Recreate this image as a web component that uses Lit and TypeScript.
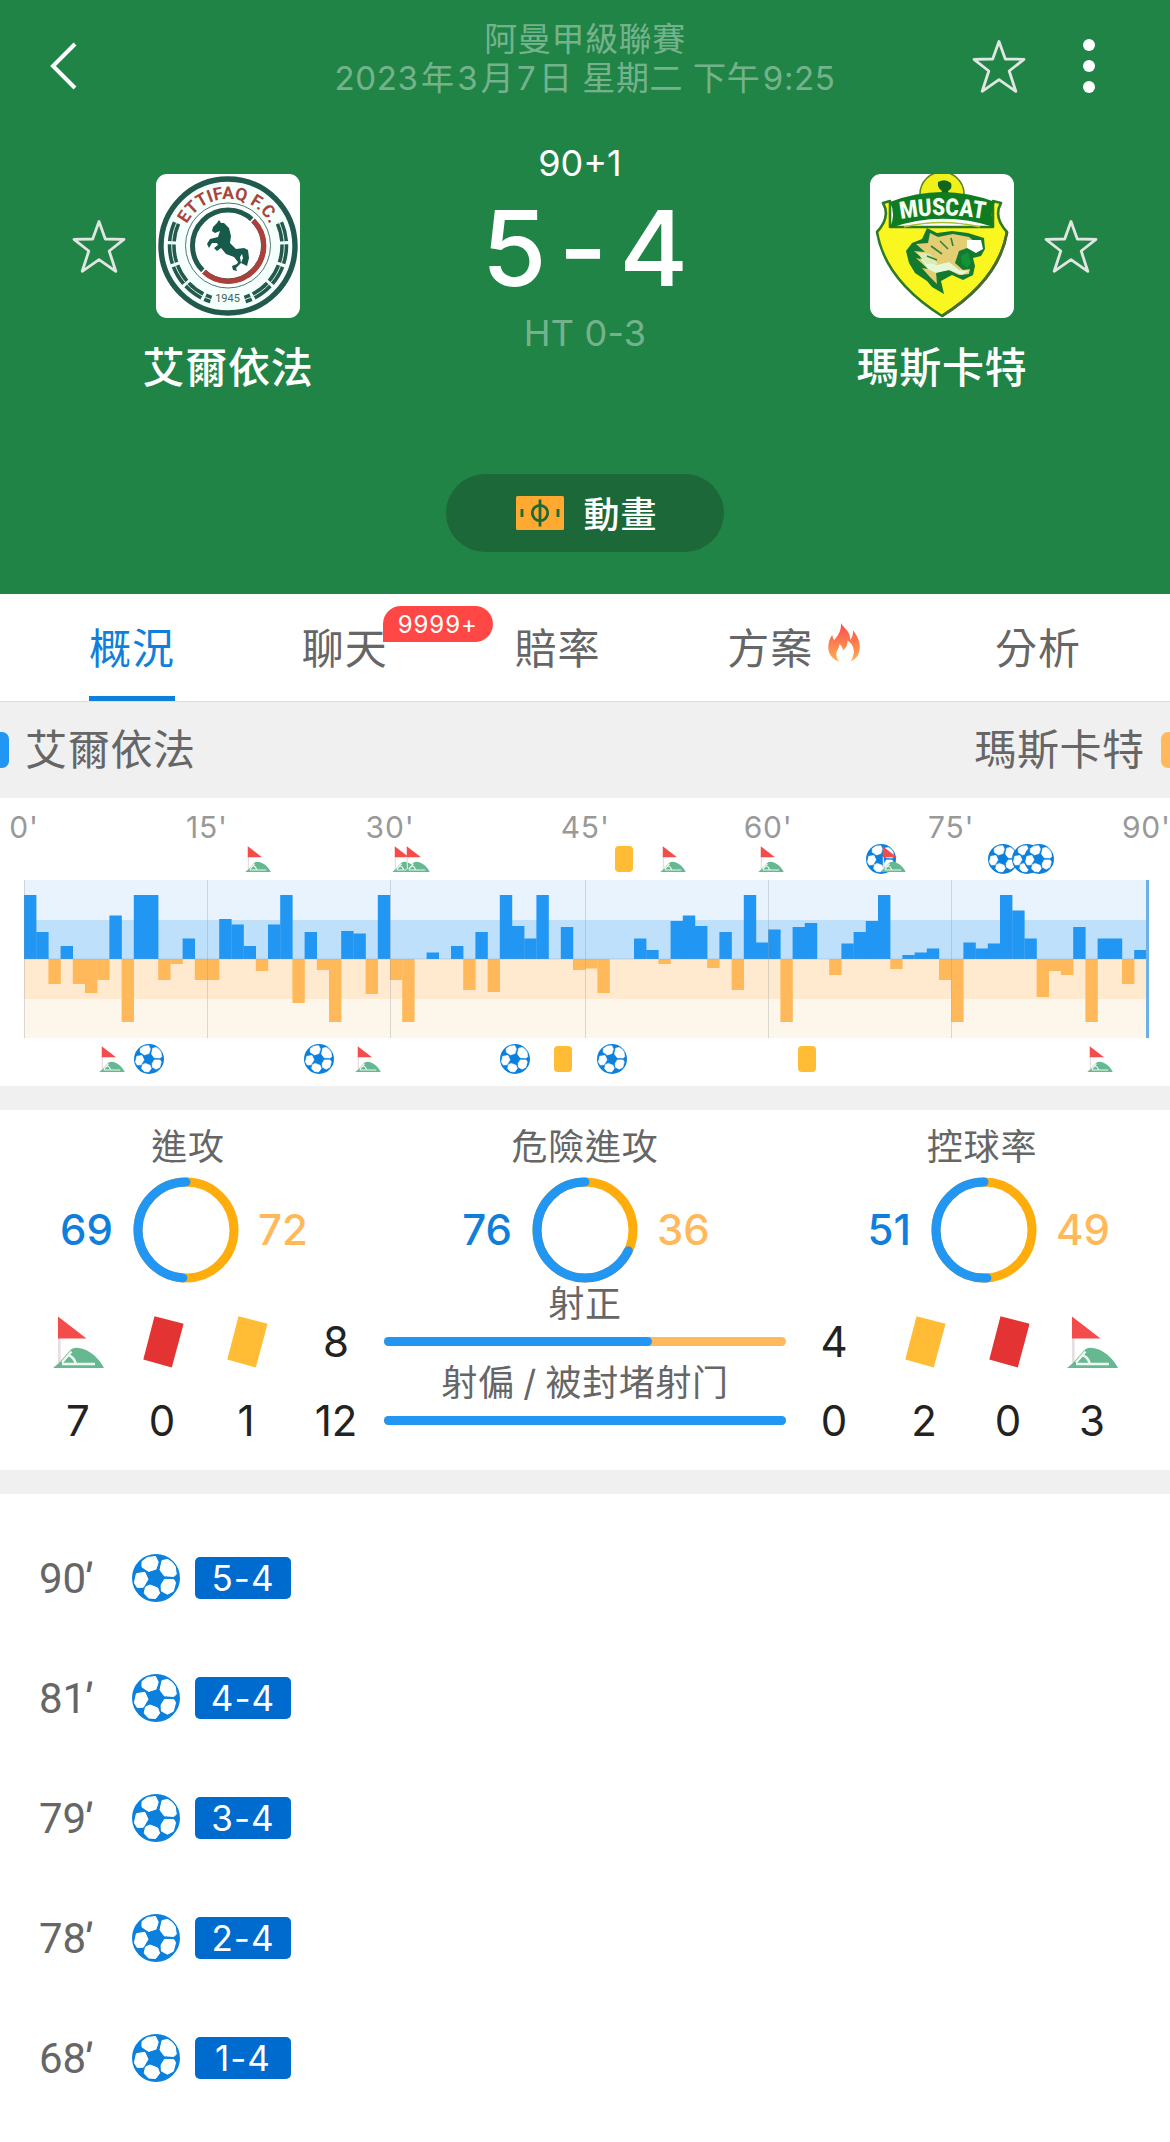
import { LitElement, html, svg, css } from 'lit';
import { customElement, property } from 'lit/decorators.js';

type PinKind = 'corner' | 'goal' | 'card';

interface Pin {
    kind: PinKind;
    slot: number;
}

const SLOT_WIDTH = 12.2;

// One value per slot, positive = home pressure, negative = away pressure
const PRESSURE = [
    64, 27, -25, 13, -25, -34, -21, 43.5, -63, 64, 64, -21, -5, 20.5, -21, -21,
    40, 34.5, 13, -12, 34.5, 64, -44, 27, -11, -63, 28, 25.5, -35, 64, -21, -63,
    0, 6.5, 0, 13, -31, 27, -33, 64, 33, 20.5, 64, 0, 32, -11, -9.5, -34,
    0, 0, 20.5, 9, -5, 38, 43.5, 33, -9, 27, -31, 64, 16.5, 29.5, -63, 32,
    36, 0, -16, 15.5, 27, 38, 64, -10, 4, 6.5, 10.5, -21, -63, 16.5, 10.5, 15.5,
    64, 48.5, 20.5, -38, -12, -16, 32, -63, 20.5, 20.5, -25, 9,
];

const TICKS = [
    { label: "0'", slot: 0 },
    { label: "15'", slot: 15 },
    { label: "30'", slot: 30 },
    { label: "45'", slot: 46 },
    { label: "60'", slot: 61 },
    { label: "75'", slot: 76 },
    { label: "90'", slot: 92 },
];

const HOME_PINS: Pin[] = [
    { kind: 'corner', slot: 19 },
    { kind: 'corner', slot: 31 },
    { kind: 'corner', slot: 32 },
    { kind: 'card', slot: 49 },
    { kind: 'corner', slot: 53 },
    { kind: 'corner', slot: 61 },
    { kind: 'goal', slot: 70 },
    { kind: 'corner', slot: 71 },
    { kind: 'goal', slot: 80 },
    { kind: 'goal', slot: 82 },
    { kind: 'goal', slot: 83 },
];

const AWAY_PINS: Pin[] = [
    { kind: 'corner', slot: 7 },
    { kind: 'goal', slot: 10 },
    { kind: 'goal', slot: 24 },
    { kind: 'corner', slot: 28 },
    { kind: 'goal', slot: 40 },
    { kind: 'card', slot: 44 },
    { kind: 'goal', slot: 48 },
    { kind: 'card', slot: 64 },
    { kind: 'corner', slot: 88 },
];

const RINGS = [
    { label: '進攻', home: 69, away: 72 },
    { label: '危險進攻', home: 76, away: 36 },
    { label: '控球率', home: 51, away: 49 },
];

const GOALS = [
    { minute: '90', score: '5-4' },
    { minute: '81', score: '4-4' },
    { minute: '79', score: '3-4' },
    { minute: '78', score: '2-4' },
    { minute: '68', score: '1-4' },
];

const starIcon = html`
    <svg class="star" viewBox="0 0 54 54">
        <path
            d="M27 2.5 L33.3 20 L52 20.3 L37.2 32 L43.8 52.3 L27 40.6 L10.2 52.3 L16.8 32 L2 20.3 L20.7 20 Z"
            fill="none" stroke="#e2e6e3" stroke-width="2.8" stroke-linejoin="round"
        />
    </svg>
`;

const ballIcon = html`
    <svg class="ball" viewBox="0 0 48 48">
        <circle cx="24" cy="24" r="24" fill="#0c80dd" />
        <g fill="#fff" stroke="#fff" stroke-width="1" stroke-linejoin="round">
            <path d="M10 7.5 L15.5 3.4 L23.6 2.6 L26.2 8 L24 15.2 L16.6 17.4 L10 13 Z" />
            <path d="M30 6.6 L35.6 5.4 Q41 8 43.2 12.6 L44.3 20.3 L41.8 22.4 L32.2 21.8 L28 16 Z" />
            <path d="M32.5 25.4 L41.8 25.6 L43.6 28.6 L41.3 37.2 L35.5 40.2 L29.4 37 L29.1 31 Z" />
            <path d="M13.5 33 L18 31 L25.7 34 L27.6 39.3 L23.5 44.6 L16.6 43.9 L12.2 39.5 Z" />
            <path d="M4.4 19.7 L12.8 18.2 L16 25.3 L11.3 33.2 L5.3 33.6 L2.4 28.8 Z" />
        </g>
    </svg>
`;

const cornerIcon = html`
    <svg class="corner" viewBox="0 0 51 52">
        <rect x="5" y="20" width="2.6" height="30" fill="#e6dede" />
        <path d="M5 0.5 L33.5 22.5 L5 22.5 Z" fill="#f44b4b" />
        <path d="M0 52 L6 47 L16.5 35 Q19.5 31.5 24 31.7 C36 32.5 46 42 51 52 Z" fill="#65b88f" />
        <path
            d="M9 46.5 L18.5 35.5 M15 39 Q21 41 22.5 47 M9 48 H42"
            fill="none" stroke="#eef9f3" stroke-width="2.4"
        />
    </svg>
`;

const cardIcon = (color: string) => html`
    <svg class="tilted-card" viewBox="0 0 41 52">
        <path d="M11.5 0.3 L40.6 7.8 L28.8 51.4 L0.3 43.5 Z" fill=${color} />
    </svg>
`;

const homeCrest = html`
    <svg class="crest" viewBox="0 0 144 144">
        <defs>
            <path id="home-arc" d="M27.5 57.5 A47 47 0 0 1 117 57.5" />
        </defs>
        <rect width="144" height="144" fill="#fff" />
        <circle cx="72" cy="72" r="67" fill="#f5fffc" stroke="#215a4d" stroke-width="5.4" />
        <circle cx="72" cy="71.5" r="42.5" fill="#fff" stroke="#4d7a70" stroke-width="1" />
        <circle cx="72" cy="71.5" r="35.5" fill="none" stroke="#1f5a4c" stroke-width="5" />
        <path d="M97 46.3 A35.5 35.5 0 0 1 47.5 97.3" fill="none" stroke="#ad3f3b" stroke-width="5.2" />
        <path d="M93.5 49 L99.5 42.5 M44.5 100 L50.5 93.5" stroke="#fff" stroke-width="1.8" />
        <g fill="none" stroke="#24594d">
            <path d="M20.5 49 A56.5 56.5 0 0 0 55 125.5" stroke-width="8" stroke-dasharray="19 3" />
            <path d="M123.5 49 A56.5 56.5 0 0 1 89 125.5" stroke-width="8" stroke-dasharray="19 3" />
        </g>
        <g fill="none" stroke="#dcefe9" stroke-width="1">
            <path d="M20.5 49 A56.5 56.5 0 0 0 55 125.5" />
            <path d="M123.5 49 A56.5 56.5 0 0 1 89 125.5" />
        </g>
        <text class="crest-ring-text" fill="#a8443e">
            <textPath href="#home-arc" startOffset="50%" text-anchor="middle" textLength="102" lengthAdjust="spacingAndGlyphs">ETTIFAQ F.C.</textPath>
        </text>
        <text class="crest-year" x="71.5" y="128" text-anchor="middle" fill="#44655c">1945</text>
        <path
            d="M63 46 L61 49 L57 53 L56 57 L59 59 L64 57 L62 63 L54 65 L51 70 L53 74 L56 69 L61 69 L62 71 L58 74 L61 77 L65 74 L70 80 L78 83 L82 88 L81 90 L76 92 L77 96 L81 97 L80 94 L85 89 L84 83 L86 80 L87 84 L85 89 L91 92 L93 84 L92 76 L88 74 L80 75 L74 69 L75 62 L73 54 L68 49 L65 49 Z"
            fill="#17594a"
        />
    </svg>
`;

const awayCrest = html`
    <svg class="crest" viewBox="0 0 144 144">
        <defs>
            <path id="away-arc" d="M29 45.5 Q72 37 116 45.5" />
        </defs>
        <rect width="144" height="144" fill="#fff" />
        <circle cx="72" cy="20" r="22" fill="#f2f01a" stroke="#5f8420" stroke-width="1.6" />
        <path d="M68 8 Q75 4 81 9 Q83 14 78 17 L80 22 H69 L72 17 Q67 14 68 8 Z" fill="#12651c" />
        <path
            d="M13 29 L20 27 V53 L123 53 V27 L131 29 Q123 43 137 58 Q129 106 72 142 Q15 106 7 58 Q21 43 13 29 Z"
            fill="#faf720" stroke="#2d7a26" stroke-width="2.6" stroke-linejoin="round"
        />
        <path d="M137 58 Q129 106 72 142" fill="none" stroke="#4b6b34" stroke-width="3" />
        <path d="M20 28 Q72 8 125 28 Q119 40 124 53 Q72 36 20 54 Q26 40 20 28 Z" fill="#107c22" />
        <path d="M34 53 Q72 44 110 53" fill="none" stroke="#a8c02a" stroke-width="1.6" />
        <text class="crest-banner" fill="#f4fff0">
            <textPath href="#away-arc" startOffset="50%" text-anchor="middle" textLength="84" lengthAdjust="spacingAndGlyphs">MUSCAT</textPath>
        </text>
        <path
            d="M57 54 L67 59 L82 57 L98 59 L114 64 L115 75 L111 82 L103 84 L105 92 L103 101 L93 106 L82 101 L71 107 L74 120 L62 113 L57 107 L45 99 L39 89 L36 77 L42 69 L52 65 Z"
            fill="#137a30"
        />
        <path
            d="M60 59 L68 63 L83 60 L99 63 L105 68 L97 74 L89 77 L85 89 L93 96 L100 95 L99 100 L89 101 L79 96 L66 98 L67 110 L59 102 L52 94 L58 95 L46 84 L54 86 L44 77 L55 78 L46 70 L58 69 Z"
            fill="#e3ce73"
        />
        <path d="M50 84 L67 91 L79 88 L89 96 L99 97 L92 101 L79 96 L66 99 L58 95 Z" fill="#e5f7d7" />
        <path d="M47 78 L60 80 L68 90 L56 90 Z" fill="#dcecb4" />
        <path d="M97 66 L111 66 L113 75 L106 79 L97 74 Z" fill="#fff" />
        <path d="M91 82 L98 78 L101 89 L97 94 L92 90 Z" fill="#149238" />
        <path d="M70 67 L78 75 M61 72 L72 80 M81 64 L83 72 M57 82 L67 86" stroke="#31823a" stroke-width="1.6" />
    </svg>
`;

const flameIcon = html`
    <svg class="flame" viewBox="0 0 33 39">
        <defs>
            <linearGradient id="flame-fill" x1="0" y1="0" x2="0" y2="1">
                <stop offset="0.1" stop-color="#fb5350" />
                <stop offset="1" stop-color="#ffb14f" />
            </linearGradient>
        </defs>
        <path
            d="M13 0 C15 4 20 7 21.5 12 Q22.3 14.5 22 17 Q25.5 13 25 7.5 C29 12 31.8 18 31.8 24 C31.8 31 28.5 36 22.8 38.3 C27.5 31 27 22 19.5 17.5 Q20 23 15 27.5 Q14.5 23 11.5 21 C11 26 8 27.5 8.3 32 Q8.5 36 11.5 38.8 C4.5 36.5 0.3 31 0.3 24.5 C0.3 19.5 1.5 15.5 4.2 12 Q4.5 15 6.3 17 C10.5 12 13.5 7 13 0 Z"
            fill="url(#flame-fill)"
        />
    </svg>
`;

@customElement('momentum-chart')
export class MomentumChart extends LitElement {
    static styles = css`
        :host {
            display: block;
            background: #fff;
            height: 288px;
        }
        .ticks,
        .pins {
            position: relative;
            margin-left: 24px;
            width: 1122px;
        }
        .ticks {
            height: 46px;
        }
        .tick {
            position: absolute;
            top: 11px;
            transform: translateX(-50%);
            font-size: 30px;
            line-height: 36px;
            letter-spacing: 0.8px;
            color: #999;
        }
        .pins {
            height: 30px;
        }
        .pins.home {
            margin-bottom: 6px;
        }
        .pins.away {
            margin-top: 6px;
        }
        .pin {
            position: absolute;
            top: 0;
            height: 30px;
            display: flex;
            align-items: center;
            transform: translateX(-50%);
        }
        .ball {
            display: block;
            width: 30px;
            height: 30px;
        }
        .corner {
            display: block;
            width: 26px;
            height: 26px;
        }
        .booking {
            width: 18px;
            height: 26px;
            border-radius: 4px;
            background: #ffbc34;
        }
        .plot {
            display: block;
            margin-left: 24px;
            width: 1125px;
            height: 158px;
        }
    `;

    private renderPin(pin: Pin) {
        const icon = pin.kind === 'goal' ? ballIcon :
            pin.kind === 'corner' ? cornerIcon :
                html`<div class="booking"></div>`;
        return html`<div class="pin" style="left: ${pin.slot * SLOT_WIDTH + 2.5}px">${icon}</div>`;
    }

    render() {
        return html`
            <div class="ticks">
                ${TICKS.map(t => html`
                    <span class="tick" style="left: ${t.slot * SLOT_WIDTH}px">${t.label}</span>
                `)}
            </div>
            <div class="pins home">${HOME_PINS.map(p => this.renderPin(p))}</div>
            <svg class="plot" viewBox="0 0 1125 158">
                <rect width="1122" height="40" fill="#e8f3fe" />
                <rect y="40" width="1122" height="39" fill="#bfe0fa" />
                <rect y="79" width="1122" height="40" fill="#ffead0" />
                <rect y="119" width="1122" height="39" fill="#fdf7eb" />
                ${PRESSURE.map((v, i) => svg`
                    <rect
                        x=${i * SLOT_WIDTH}
                        y=${v > 0 ? 79 - v : 79}
                        width=${SLOT_WIDTH + 0.2}
                        height=${Math.abs(v)}
                        fill=${v > 0 ? '#2196f3' : '#ffb95a'}
                    />
                `)}
                <rect y="78.5" width="1122" height="1" fill="#8c9aa5" fill-opacity="0.35" />
                ${TICKS.slice(0, -1).map(t => svg`
                    <rect x=${Math.round(t.slot * SLOT_WIDTH)} width="1" height="158" fill="#8a8f96" fill-opacity="0.3" />
                `)}
                <rect x="1122" width="3" height="158" fill="#6cb0e8" />
            </svg>
            <div class="pins away">${AWAY_PINS.map(p => this.renderPin(p))}</div>
        `;
    }
}

@customElement('stat-ring')
export class StatRing extends LitElement {
    @property({ type: Number }) home = 0;
    @property({ type: Number }) away = 0;

    static styles = css`
        :host {
            display: grid;
            grid-template-columns: 1fr 106px 1fr;
            column-gap: 20px;
            align-items: center;
            font-size: 42px;
            line-height: 50px;
            font-weight: 500;
        }
        svg {
            display: block;
            width: 106px;
            height: 106px;
        }
        .home {
            text-align: right;
            color: #107fdb;
        }
        .away {
            margin-left: -1px;
            color: #ffb95a;
        }
    `;

    render() {
        const share = this.home / (this.home + this.away) * 100;
        return html`
            <span class="home">${this.home}</span>
            <svg viewBox="0 0 106 106">
                <circle cx="53" cy="53" r="48" fill="none" stroke="#ffad0c" stroke-width="9" />
                <circle
                    cx="53" cy="53" r="48" fill="none" stroke="#2196f3" stroke-width="9"
                    stroke-linecap="round" pathLength="100" stroke-dasharray="${share} 100"
                    transform="matrix(0 -1 -1 0 106 106)"
                />
            </svg>
            <span class="away">${this.away}</span>
        `;
    }
}

@customElement('app-root')
export class AppRoot extends LitElement {
    static styles = css`
        :host {
            display: block;
            width: 1170px;
            height: 2142px;
            overflow: hidden;
            background: #fff;
            font-family: Inter, "Noto Sans CJK TC", sans-serif;
        }
        svg {
            display: block;
        }
        .star {
            width: 54px;
            height: 54px;
        }

        /* Header */
        .header {
            height: 594px;
            box-sizing: border-box;
            background: #218447;
            color: #fff;
        }
        .topbar {
            display: grid;
            grid-template-columns: 1fr auto 1fr;
            align-items: center;
            height: 132px;
            padding: 0 75px 0 50px;
        }
        .title {
            padding: 0 0 14px 25px;
            text-align: center;
            color: rgba(255, 255, 255, 0.4);
            font-size: 33px;
            line-height: 39px;
            letter-spacing: 0.6px;
        }
        .num {
            margin: 0 2.6px;
        }
        .back {
            width: 28px;
            height: 48px;
        }
        .actions {
            display: flex;
            justify-content: flex-end;
            align-items: center;
            gap: 57px;
        }
        .more {
            display: flex;
            flex-direction: column;
            gap: 9px;
        }
        .more i {
            width: 12px;
            height: 12px;
            border-radius: 50%;
            background: #fff;
        }
        .match {
            display: flex;
            justify-content: space-between;
            height: 342px;
            padding: 0 72px;
        }
        .team {
            display: grid;
            grid-template-columns: 54px 144px;
            grid-template-rows: 144px 50px;
            column-gap: 30px;
            row-gap: 25px;
            align-items: center;
            align-content: start;
            padding-top: 42px;
        }
        .team.away {
            grid-template-columns: 144px 54px;
        }
        .crest {
            width: 144px;
            height: 144px;
            border-radius: 11px;
        }
        .crest-ring-text {
            font: 700 17.5px Roboto, sans-serif;
        }
        .crest-year {
            font: 400 11px Roboto, sans-serif;
        }
        .crest-banner {
            font: 900 24px Roboto, sans-serif;
        }
        .name {
            display: flex;
            justify-content: center;
            white-space: nowrap;
            font-size: 42px;
            line-height: 50px;
            letter-spacing: 0.7px;
            font-weight: 500;
        }
        .team.home .name {
            grid-column: 2;
        }
        .team.away .name {
            grid-column: 1;
        }
        .score-box {
            text-align: center;
            padding-top: 10px;
        }
        .clock,
        .half-time {
            font-size: 36px;
            line-height: 42px;
        }
        .clock {
            padding-right: 10px;
        }
        .half-time {
            color: rgba(255, 255, 255, 0.4);
            letter-spacing: 0.2px;
        }
        .score {
            font-size: 105px;
            line-height: 128px;
            font-weight: 500;
            display: flex;
            justify-content: center;
            gap: 12px;
        }
        .animation {
            display: flex;
            align-items: center;
            justify-content: center;
            gap: 19px;
            box-sizing: border-box;
            width: 278px;
            height: 78px;
            margin: 0 auto;
            padding: 0 0 2px 4px;
            border-radius: 39px;
            background: #1d6838;
            font-size: 36px;
            letter-spacing: 1px;
            font-weight: 500;
        }
        .pitch {
            width: 48px;
            height: 34px;
            margin-top: 2px;
        }

        /* Tabs */
        .tabs {
            display: flex;
            justify-content: space-between;
            height: 107px;
            padding: 0 89px;
            border-bottom: 1px solid #dedede;
            color: #666;
            font-size: 42px;
            letter-spacing: 1px;
        }
        .tab {
            position: relative;
            display: flex;
            align-items: center;
            gap: 15px;
            box-sizing: border-box;
            height: 107px;
            border-bottom: 5px solid transparent;
        }
        .tab.active {
            color: #107fdb;
            border-bottom-color: #107fdb;
        }
        .tab.hot {
            width: 141px;
        }
        .flame {
            width: 33px;
            height: 39px;
            margin-top: -6px;
        }
        .badge {
            position: absolute;
            left: 81px;
            top: 12px;
            width: 110px;
            height: 36px;
            border-radius: 18px 18px 18px 0;
            background: #ff4746;
            color: #fff;
            text-align: center;
            font-size: 24px;
            line-height: 37px;
            letter-spacing: 0.9px;
        }

        /* Legend */
        .legend {
            display: flex;
            align-items: center;
            justify-content: space-between;
            height: 96px;
            background: #f0f0f0;
            color: #666;
            font-size: 42px;
            line-height: 50px;
            letter-spacing: 0.7px;
        }
        .side {
            display: flex;
            align-items: center;
            gap: 16px;
        }
        .side::before {
            content: '';
            width: 9px;
            height: 36px;
            border-radius: 0 7px 7px 0;
            background: #2196f3;
        }
        .side.away {
            flex-direction: row-reverse;
        }
        .side.away::before {
            border-radius: 7px 0 0 7px;
            background: #ffb95a;
        }
        .divider {
            height: 24px;
            background: #f0f0f0;
        }

        /* Stats */
        .stats {
            height: 360px;
            color: #222;
            overflow: hidden;
        }
        .ring-labels,
        .rings {
            display: grid;
            grid-template-columns: repeat(3, 1fr);
        }
        .ring-labels {
            height: 67px;
            margin: 0 -10.5px;
            color: #666;
            font-size: 36px;
            line-height: 74px;
            letter-spacing: 0.8px;
            text-align: center;
        }
        .rings {
            margin: 0 -13.5px;
        }
        .details {
            display: grid;
            grid-template-columns: repeat(3, 84px) 96px 402px 96px repeat(3, 84px);
            grid-template-rows: 79px 79px;
            padding: 19px 36px 0;
            font-size: 42px;
        }
        .cell {
            display: flex;
            align-items: center;
            justify-content: center;
        }
        .cell .corner {
            width: 51px;
            height: 52px;
        }
        .cell .tilted-card {
            width: 41px;
            height: 52px;
            margin-left: 3px;
        }
        .bar-cell {
            margin-top: -19px;
            text-align: center;
            color: #666;
            font-size: 36px;
            line-height: 43px;
            letter-spacing: 0.6px;
            word-spacing: -2px;
            white-space: nowrap;
        }
        .bar {
            height: 9px;
            margin-top: 11px;
            border-radius: 5px;
            background: #ffb95a;
        }
        .fill {
            height: 9px;
            border-radius: 5px;
            background: #2196f3;
        }

        /* Goal list */
        .goals {
            padding-top: 24px;
        }
        .goal {
            display: grid;
            grid-template-columns: 78px 48px 96px;
            column-gap: 15px;
            align-items: center;
            height: 120px;
            padding-left: 39px;
        }
        .goal .ball {
            width: 48px;
            height: 48px;
        }
        .minute {
            padding-top: 1px;
            font-family: Roboto, sans-serif;
            font-size: 42px;
            line-height: 50px;
            color: #666;
        }
        .prime {
            display: inline-block;
            margin-left: -2.5px;
            transform: skewX(-9deg);
            font-weight: 500;
        }
        .goal-score {
            height: 42px;
            border-radius: 5px;
            background: #006bcf;
            color: #fff;
            text-align: center;
            font-size: 35px;
            line-height: 42px;
            letter-spacing: 1px;
        }
    `;

    private renderHeader() {
        return html`
            <div class="header">
                <div class="topbar">
                    <svg class="back" viewBox="0 0 28 48">
                        <path d="M25 2 L3 24 L25 46" fill="none" stroke="#fff" stroke-width="4" />
                    </svg>
                    <div class="title">
                        <div>阿曼甲級聯賽</div>
                        <div><span class="num">2023</span>年<span class="num">3</span>月<span class="num">7</span>日 星期二 下午<span class="num">9:25</span></div>
                    </div>
                    <div class="actions">
                        ${starIcon}
                        <div class="more"><i></i><i></i><i></i></div>
                    </div>
                </div>
                <div class="match">
                    <div class="team home">
                        ${starIcon}
                        ${homeCrest}
                        <div class="name">艾爾依法</div>
                    </div>
                    <div class="score-box">
                        <div class="clock">90+1</div>
                        <div class="score"><span>5</span><span>-</span><span>4</span></div>
                        <div class="half-time">HT 0-3</div>
                    </div>
                    <div class="team away">
                        ${awayCrest}
                        ${starIcon}
                        <div class="name">瑪斯卡特</div>
                    </div>
                </div>
                <div class="animation">
                    <svg class="pitch" viewBox="0 0 48 34">
                        <rect width="48" height="34" rx="1.5" fill="#ffa931" />
                        <g fill="none" stroke="#1d6838" stroke-width="2.8">
                            <circle cx="24" cy="17" r="7.7" />
                            <path d="M24 3.5 V30.5 M6 13 V21 M42 13 V21" />
                        </g>
                    </svg>
                    <span>動畫</span>
                </div>
            </div>
        `;
    }

    private renderTabs() {
        return html`
            <div class="tabs">
                <div class="tab active">概況</div>
                <div class="tab">聊天<span class="badge">9999+</span></div>
                <div class="tab">賠率</div>
                <div class="tab hot">方案${flameIcon}</div>
                <div class="tab">分析</div>
            </div>
        `;
    }

    private renderBar(label: string, home: number, away: number) {
        return html`
            <div class="bar-cell">
                ${label}
                <div class="bar">
                    <div class="fill" style="width: ${home / (home + away) * 100}%"></div>
                </div>
            </div>
        `;
    }

    private renderStats() {
        return html`
            <div class="stats">
                <div class="ring-labels">
                    ${RINGS.map(r => html`<div>${r.label}</div>`)}
                </div>
                <div class="rings">
                    ${RINGS.map(r => html`<stat-ring .home=${r.home} .away=${r.away}></stat-ring>`)}
                </div>
                <div class="details">
                    <div class="cell">${cornerIcon}</div>
                    <div class="cell">${cardIcon('#e33333')}</div>
                    <div class="cell">${cardIcon('#ffbc34')}</div>
                    <div class="cell">8</div>
                    ${this.renderBar('射正', 8, 4)}
                    <div class="cell">4</div>
                    <div class="cell">${cardIcon('#ffbc34')}</div>
                    <div class="cell">${cardIcon('#e33333')}</div>
                    <div class="cell">${cornerIcon}</div>
                    <div class="cell">7</div>
                    <div class="cell">0</div>
                    <div class="cell">1</div>
                    <div class="cell">12</div>
                    ${this.renderBar('射偏 / 被封堵射门', 12, 0)}
                    <div class="cell">0</div>
                    <div class="cell">2</div>
                    <div class="cell">0</div>
                    <div class="cell">3</div>
                </div>
            </div>
        `;
    }

    render() {
        return html`
            ${this.renderHeader()}
            ${this.renderTabs()}
            <div class="legend">
                <div class="side home">艾爾依法</div>
                <div class="side away">瑪斯卡特</div>
            </div>
            <momentum-chart></momentum-chart>
            <div class="divider"></div>
            ${this.renderStats()}
            <div class="divider"></div>
            <div class="goals">
                ${GOALS.map(g => html`
                    <div class="goal">
                        <span class="minute">${g.minute}<span class="prime">'</span></span>
                        ${ballIcon}
                        <span class="goal-score">${g.score}</span>
                    </div>
                `)}
            </div>
        `;
    }
}
